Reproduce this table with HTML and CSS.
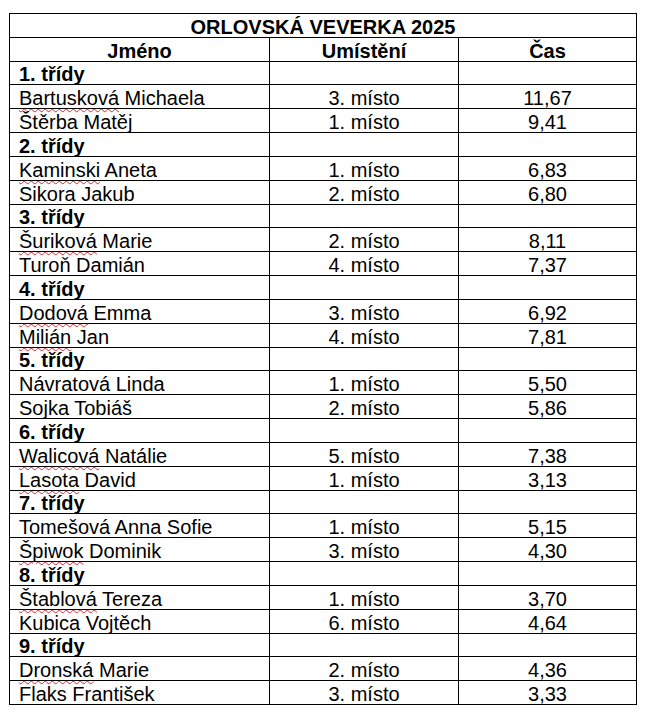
FILE: index.html
```html
<!DOCTYPE html>
<html lang="cs">
<head>
<meta charset="utf-8">
<title>Orlovská veverka 2025</title>
<link rel="stylesheet" href="styles.css">
</head>
<body>
<table class="results">
  <colgroup>
    <col class="c-name">
    <col class="c-place">
    <col class="c-time">
  </colgroup>
  <tbody>
    <tr><td class="title" colspan="3">ORLOVSKÁ VEVERKA 2025</td></tr>
    <tr class="head"><td>Jméno</td><td>Umístění</td><td>Čas</td></tr>

    <tr class="grp"><td>1. třídy</td><td></td><td></td></tr>
    <tr><td class="name"><span class="sp">Bartusková</span> Michaela</td><td>3. místo</td><td>11,67</td></tr>
    <tr><td class="name">Štěrba Matěj</td><td>1. místo</td><td>9,41</td></tr>

    <tr class="grp"><td>2. třídy</td><td></td><td></td></tr>
    <tr><td class="name"><span class="sp">Kaminski</span> Aneta</td><td>1. místo</td><td>6,83</td></tr>
    <tr><td class="name">Sikora Jakub</td><td>2. místo</td><td>6,80</td></tr>

    <tr class="grp"><td>3. třídy</td><td></td><td></td></tr>
    <tr><td class="name"><span class="sp">Šuriková</span> Marie</td><td>2. místo</td><td>8,11</td></tr>
    <tr><td class="name">Turoň Damián</td><td>4. místo</td><td>7,37</td></tr>

    <tr class="grp"><td>4. třídy</td><td></td><td></td></tr>
    <tr><td class="name"><span class="sp">Dodová</span> Emma</td><td>3. místo</td><td>6,92</td></tr>
    <tr><td class="name"><span class="sp">Milián</span> Jan</td><td>4. místo</td><td>7,81</td></tr>

    <tr class="grp"><td>5. třídy</td><td></td><td></td></tr>
    <tr><td class="name">Návratová Linda</td><td>1. místo</td><td>5,50</td></tr>
    <tr><td class="name">Sojka Tobiáš</td><td>2. místo</td><td>5,86</td></tr>

    <tr class="grp"><td>6. třídy</td><td></td><td></td></tr>
    <tr><td class="name"><span class="sp">Walicová</span> Natálie</td><td>5. místo</td><td>7,38</td></tr>
    <tr><td class="name"><span class="sp">Lasota</span> David</td><td>1. místo</td><td>3,13</td></tr>

    <tr class="grp"><td>7. třídy</td><td></td><td></td></tr>
    <tr><td class="name">Tomešová Anna Sofie</td><td>1. místo</td><td>5,15</td></tr>
    <tr><td class="name"><span class="sp">Špiwok</span> Dominik</td><td>3. místo</td><td>4,30</td></tr>

    <tr class="grp"><td>8. třídy</td><td></td><td></td></tr>
    <tr><td class="name"><span class="sp">Štablová</span> Tereza</td><td>1. místo</td><td>3,70</td></tr>
    <tr><td class="name">Kubica Vojtěch</td><td>6. místo</td><td>4,64</td></tr>

    <tr class="grp"><td>9. třídy</td><td></td><td></td></tr>
    <tr><td class="name"><span class="sp">Dronská</span> Marie</td><td>2. místo</td><td>4,36</td></tr>
    <tr><td class="name">Flaks František</td><td>3. místo</td><td>3,33</td></tr>
  </tbody>
</table>
</body>
</html>
```

FILE: styles.css
```css
html, body {
  margin: 0;
  padding: 0;
  background: #ffffff;
}

body {
  padding: 13px 0 0 9px;
  font-family: "Liberation Sans", Arial, sans-serif;
  font-size: 20px;
  color: #000000;
}

.results {
  border-collapse: collapse;
  table-layout: fixed;
  width: 627px;
}

.c-name { width: 260px; }
.c-place { width: 189px; }
.c-time { width: 178px; }

.results td {
  border: 1px solid #000000;
  height: 22.83px;
  padding: 0;
  line-height: 19px;
  vertical-align: bottom;
  text-align: center;
  white-space: nowrap;
}

.results td.title,
.results tr.head td {
  font-weight: bold;
}

.results tr.grp td:first-child {
  font-weight: bold;
  text-align: left;
  padding-left: 9px;
}

.results td.name {
  text-align: left;
  padding-left: 9px;
}

.sp {
  text-decoration-line: underline;
  text-decoration-style: wavy;
  text-decoration-color: #d9262e;
  text-decoration-thickness: 1px;
  text-underline-offset: 3px;
}
```
